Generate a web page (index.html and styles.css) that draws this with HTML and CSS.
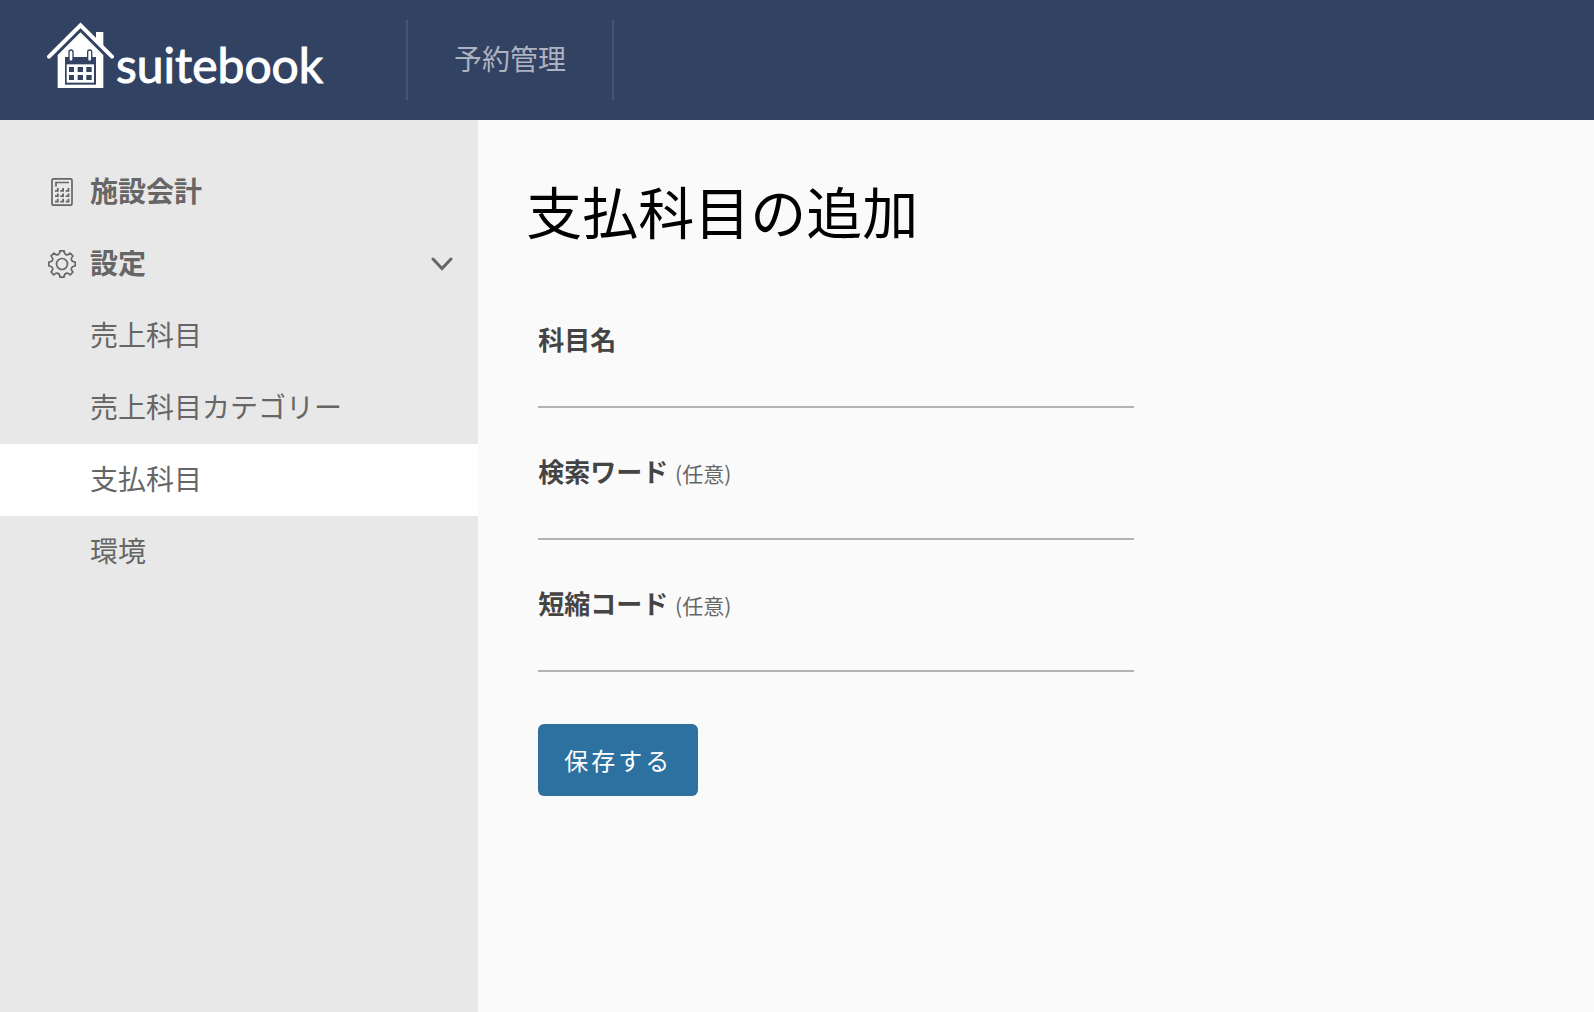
FILE: index.html
```html
<!DOCTYPE html>
<html lang="ja">
<head>
<meta charset="utf-8">
<meta name="viewport" content="width=device-width, initial-scale=1">
<title>支払科目の追加 | suitebook</title>
<link rel="stylesheet" href="styles.css">
</head>
<body>
<header class="header">
  <a class="logo" href="#">
    <svg class="logo-mark" viewBox="21 18 201 198" aria-hidden="true">
      <path d="M27 122 121.500 28 216 122" fill="none" stroke="#fff" stroke-width="12" stroke-linecap="round"/>
      <path d="M168 48h22v50l-22-22z" fill="#fff"/>
      <path d="M121.500 49 190 117v99H53v-99z" fill="#fff"/>
      <path d="M75 123h93v83H75z" fill="#324262"/>
      <path d="M93 108v22M149 108v22" stroke="#324262" stroke-width="16" stroke-linecap="round"/>
      <path d="M93 108v22M149 108v22" stroke="#fff" stroke-width="8" stroke-linecap="round"/>
      <path d="M80 145h82v55H80z" fill="#fff"/>
      <path d="M87 153h15v15H87zM113 153h16v15h-16zM139 153h16v15h-16zM87 177h15v15H87zM113 177h16v15h-16zM139 177h16v15h-16z" fill="#324262"/>
    </svg>
    <span class="logo-text">suitebook</span>
  </a>
  <nav class="global-nav">
    <a class="global-link" href="#">予約管理</a>
  </nav>
</header>
<div class="layout">
  <nav class="sidebar" aria-label="施設会計">
    <a class="menu-item" href="#">
      <svg class="menu-icon" viewBox="0 0 28 28" fill="none" stroke="#666" aria-hidden="true">
        <rect x="4" y=".8" width="20" height="26.400" rx="1.500" stroke-width="1.700"/>
        <path d="M8 8.500V4.500h13" stroke-width="1.700"/>
        <path d="M7 12.800h2.800V10M12.300 12.800h2.800V10M17.700 12.800h2.800V10M7 18.200h2.800v-2.800M12.300 18.200h2.800v-2.800M17.700 18.200h2.800v-2.800M7 23.600h2.800v-2.800M12.300 23.600h2.800v-2.800M17.700 23.600h2.800v-2.800" stroke-width="1.800"/>
      </svg>
      <span class="menu-label">施設会計</span>
    </a>
    <button class="menu-item" type="button" aria-expanded="true" aria-controls="settings-menu">
      <svg class="menu-icon" viewBox="0 0 28 28" fill="none" stroke="#666" stroke-width="1.700" stroke-linejoin="round" aria-hidden="true">
        <circle cx="14" cy="14" r="5.500"/>
        <path d="M12 .8h4q.2 3.600 2.700 4.100 1.500.3 3.500-1.700l2.800 2.800q-2 2-1.700 3.400.5 2.500 3.900 2.600v4q-3.400.1-3.900 2.600-.3 1.400 1.700 3.400l-2.800 2.800q-2-2-3.500-1.700-2.500.5-2.700 4.100h-4q-.2-3.600-2.700-4.100-1.500-.3-3.500 1.700L3 22q2-2 1.700-3.400Q4.200 16.100.8 16v-4q3.400-.1 3.900-2.600Q5 8 3 6l2.800-2.800q2 2 3.500 1.700Q11.800 4.400 12 .8z"/>
      </svg>
      <span class="menu-label">設定</span>
      <svg class="chevron" viewBox="0 0 22 14" fill="none" stroke="#666" stroke-width="3" stroke-linecap="round" aria-hidden="true"><path d="M2 2l9 9.500L20 2"/></svg>
    </button>
    <ul class="submenu" id="settings-menu">
      <li><a class="submenu-link" href="#">売上科目</a></li>
      <li><a class="submenu-link" href="#">売上科目カテゴリー</a></li>
      <li><a class="submenu-link current" href="#" aria-current="page">支払科目</a></li>
      <li><a class="submenu-link" href="#">環境</a></li>
    </ul>
  </nav>
  <main class="main">
    <h1 class="title">支払科目の追加</h1>
    <form class="form">
      <div class="field">
        <label class="label" for="name">科目名</label>
        <input class="input" id="name" type="text">
      </div>
      <div class="field">
        <label class="label" for="word">検索ワード <span class="optional">(任意)</span></label>
        <input class="input" id="word" type="text">
      </div>
      <div class="field">
        <label class="label" for="code">短縮コード <span class="optional">(任意)</span></label>
        <input class="input" id="code" type="text">
      </div>
      <button class="save" type="submit">保存する</button>
    </form>
  </main>
</div>
</body>
</html>
```
FILE: styles.css
```css
* {
  box-sizing: border-box;
}

body {
  margin: 0;
  display: flex;
  flex-direction: column;
  min-height: 100vh;
  background: #fafafa;
  color: #444;
  font-family: "Noto Sans CJK JP", sans-serif;
  font-size: 28px;
}

a {
  color: inherit;
  text-decoration: none;
}

.header {
  display: flex;
  align-items: center;
  height: 120px;
  background: #324262;
}

.logo {
  display: flex;
  gap: 2px;
  width: 406px;
  padding-left: 47px;
  color: #fff;
}

.logo-mark {
  flex: none;
  width: 67px;
  height: 66px;
}

.logo-text {
  padding-top: 10px;
  font-family: Lato, sans-serif;
  font-size: 48px;
  line-height: 66px;
  -webkit-text-stroke: 1px #fff;
}

.global-nav {
  display: flex;
}

.global-link {
  padding: 0 46px 4px;
  border: solid #475573;
  border-width: 0 2px;
  line-height: 76px;
  color: #adb3c0;
}

.layout {
  display: flex;
  flex: 1;
}

.sidebar {
  flex: none;
  width: 30%;
  padding-top: 36px;
  background: #e8e8e8;
  color: #666;
}

.menu-item {
  display: flex;
  align-items: center;
  gap: 14px;
  width: 100%;
  height: 72px;
  padding: 0 25px 0 48px;
  border: 0;
  background: none;
  color: inherit;
  font: inherit;
  font-weight: 700;
  text-align: left;
}

.menu-icon {
  flex: none;
  width: 28px;
  height: 28px;
}

.menu-label {
  flex: 1;
  padding-bottom: 4px;
}

.chevron {
  width: 22px;
  height: 14px;
}

.submenu {
  margin: 0;
  padding: 0;
  list-style: none;
}

.submenu-link {
  display: block;
  padding: 0 0 4px 90px;
  line-height: 68px;
}

.current {
  background: #fff;
}

.main {
  flex: 1;
  padding: 48px;
}

.title {
  margin: 0 0 68px;
  color: #000;
  font-size: 56px;
  font-weight: 400;
  line-height: 84px;
}

.form {
  max-width: 608px;
  padding-left: 12px;
}

.field {
  margin-bottom: 44px;
}

.label {
  display: block;
  padding-bottom: 2px;
  font-size: 26px;
  font-weight: 700;
  line-height: 38px;
}

.optional {
  margin-left: 1px;
  color: #666;
  font-size: 21px;
  font-weight: 400;
  line-height: 1;
}

.input {
  display: block;
  width: 100%;
  height: 48px;
  padding: 0;
  border: 0;
  border-bottom: 2px solid #b2b2b2;
  border-radius: 0;
  background: none;
  color: #444;
  font: inherit;
  outline: 0;
}

.save {
  height: 72px;
  margin-top: 8px;
  padding: 0 26px 2px;
  border: 0;
  border-radius: 6px;
  background: #2c719f;
  color: #fff;
  font: inherit;
  font-size: 24px;
  letter-spacing: 3px;
}
```
